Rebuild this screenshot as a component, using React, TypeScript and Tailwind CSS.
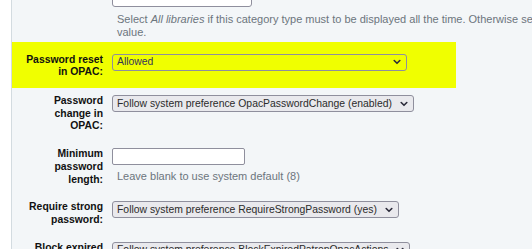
import React from "react";

function Chevron() {
  return (
    <svg width="8" height="6" viewBox="0 0 8 6" className="shrink-0">
      <path d="M1.2 1.5 L4 4.3 L6.8 1.5" fill="none" stroke="#2b2b3a" strokeWidth="1.6" strokeLinecap="round" strokeLinejoin="round" />
    </svg>
  );
}

function Select({ text, width, clear }: { text: string; width?: string; clear?: boolean }) {
  return (
    <div
      className={`inline-flex h-[17px] items-center justify-between gap-[8px] rounded-[3px] border border-[#8f8f9d] pl-[4px] pr-[5px] text-[10.4px] leading-[12px] whitespace-nowrap ${
        clear ? "bg-transparent text-[#35355a]" : "bg-[#e9e9ed] text-[#2b2b2b]"
      } ${width ?? ""}`}
    >
      <span>{text}</span>
      <Chevron />
    </div>
  );
}

function Row({ label, children, className }: { label: string; children: React.ReactNode; className?: string }) {
  return (
    <div className={`flex pt-[7px] pb-[8px] ${className ?? ""}`}>
      <div className="ml-[11px] w-[80px] shrink-0 text-right text-[10.4px] font-bold leading-[12.7px] text-[#111]">{label}</div>
      <div className="ml-[9px] flex flex-col items-start">{children}</div>
    </div>
  );
}

export default function App() {
  return (
    <div className="flex h-[249px] w-[532px] overflow-hidden bg-white font-['Liberation_Sans',Arial,sans-serif]">
      <div className="w-[11px] shrink-0" />
      <div className="flex flex-1 flex-col border-l border-[#d3dbe0] bg-[#f3f6f8]">
        <div className="-mt-[12px] flex">
          <div className="ml-[100px] flex flex-col items-start">
            <div className="h-[19px] w-[140px] overflow-hidden rounded-[3px] border border-[#8f8f9d] bg-white pl-[15px] pt-[2px] text-[10.4px] leading-[12px] text-[#333]">
              Riverside
            </div>
            <p className="ml-[5px] mt-[6px] whitespace-nowrap text-[11px] leading-[13.3px] text-[#6c757d]">
              Select <i>All libraries</i> if this category type must to be displayed all the time. Otherwise select libraries you want to associate with this
              <br />
              value.
            </p>
          </div>
        </div>
        <div className="mt-[2px] w-[444px] bg-[#f0ff00]">
          <Row label="Password reset in OPAC:" className="!pt-[12px] !pb-[9px]">
            <Select text="Allowed" width="w-[295px]" clear />
          </Row>
        </div>
        <Row label="Password change in OPAC:">
          <Select text="Follow system preference OpacPasswordChange (enabled)" />
        </Row>
        <Row label="Minimum password length:">
          <div className="h-[17px] w-[133px] rounded-[2px] border border-[#8f8f9d] bg-white" />
          <p className="ml-[5px] mt-[5px] text-[11px] leading-[13px] text-[#6c757d]">Leave blank to use system default (8)</p>
        </Row>
        <Row label="Require strong password:">
          <Select text="Follow system preference RequireStrongPassword (yes)" />
        </Row>
        <Row label="Block expired patrons:">
          <Select text="Follow system preference BlockExpiredPatronOpacActions" />
        </Row>
      </div>
    </div>
  );
}
